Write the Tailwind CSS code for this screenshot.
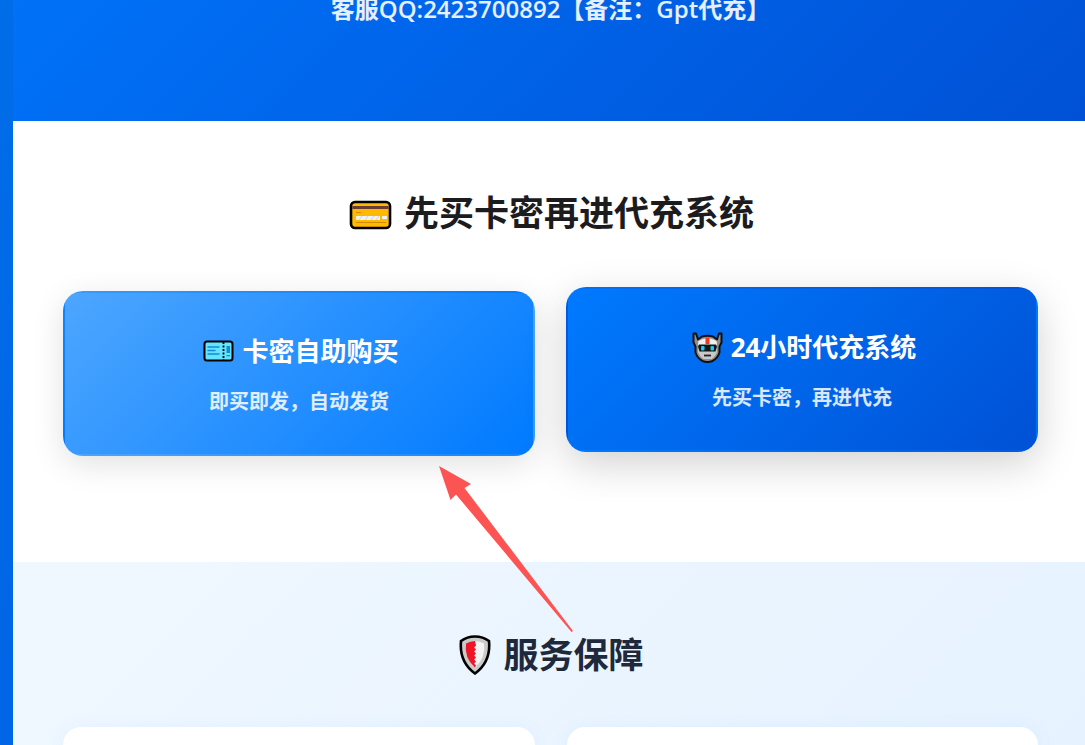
<!DOCTYPE html>
<html lang="zh-CN">
<head>
<meta charset="utf-8">
<meta name="viewport" content="width=device-width, initial-scale=1">
<title>代充系统</title>
<script src="https://cdn.jsdelivr.net/npm/@tailwindcss/browser@4"></script>
</head>
<body class="min-h-screen bg-linear-to-b from-[#006de8] to-[#0065e6] pl-[13px] font-['Open_Sans','Noto_Sans_CJK_SC',sans-serif]">
<div class="relative flex min-h-screen flex-col">
  <header class="h-[121px] overflow-hidden bg-[linear-gradient(135deg,#0072f8,#0051d5)] pl-[50px] pr-[47px] text-center">
    <p class="-mt-[9px] text-2xl leading-9 font-semibold text-white/90">客服QQ:2423700892【备注：Gpt代充】</p>
  </header>

  <main class="flex grow flex-col">
    <section class="h-[441px] bg-white pt-[66px] pr-[47px] pl-[50px]">
      <h2 class="flex items-center justify-center gap-3 pl-0.5 text-[35px] leading-[52px] font-bold text-[#1c1c1e]">
        <svg class="mt-1 h-[30px] w-[43px]" viewBox="0 0 43 30" aria-hidden="true">
          <rect x="2" y="2" width="39" height="26" rx="4" fill="#ffb900" stroke="#000" stroke-width="2.6"/>
          <path d="M3.300 6h36.400v3H3.300z" fill="#6b3d32"/>
          <path d="M7 12.500h5M7 22.500h30" stroke="#d08b00" stroke-width="1"/>
          <path d="M7 16h24v4H7zM33 16h5v3h-5z" fill="#f2f2f2"/>
          <path d="m10 20 3-4m3 4 3-4m3 4 3-4m2 4 3-4" stroke="#cbd5dc"/>
        </svg>
        <span>先买卡密再进代充系统</span>
      </h2>
      <div class="mt-[52px] grid grid-cols-2 gap-[31px] text-center text-white">
        <a href="#buy" class="block h-[165px] rounded-[20px] border-2 border-transparent bg-[linear-gradient(135deg,#4da6ff,#007aff)] pt-10 shadow-[0_8px_32px_rgba(0,0,0,0.12)]">
          <strong class="flex items-center justify-center gap-2 pl-1 text-[26px] leading-9 font-bold">
            <svg class="h-[22px] w-[31px]" viewBox="0 0 31 22" aria-hidden="true">
              <rect x="1.500" y="1.500" width="28" height="19" rx="2.500" fill="#63e4ff" stroke="#000" stroke-width="2"/>
              <path d="M5 7h11M5 10.500h7M5 14h11" stroke="#1688d8" stroke-width="1.300" stroke-linecap="round"/>
              <path d="M20.500 2v18" stroke="#000" stroke-width="1.800" stroke-dasharray="2 1.500"/>
              <path d="M23.500 6h3.500v7h-3.500zM23.500 15h3.500v1.300h-3.500z" fill="#1688d8"/>
            </svg>
            <span>卡密自助购买</span>
          </strong>
          <span class="mt-[17px] block text-xl leading-8 font-semibold text-white/85">即买即发，自动发货</span>
        </a>
        <a href="#recharge" class="-mt-1 block h-[165px] rounded-[20px] border-2 border-transparent bg-[linear-gradient(135deg,#007aff,#0051d5)] pt-10 shadow-[0_12px_40px_rgba(0,0,0,0.18)]">
          <strong class="flex items-center justify-center gap-2 pl-1 text-[26px] leading-9 font-bold">
            <svg class="h-[31px] w-[31px]" viewBox="0 0 31 31" aria-hidden="true">
              <path d="M1.500 1.500h2.500l2 6 4-3q5.500-1.500 11 0l4 3 2-6h2.500v9l-2 4v6q-2 6-7 8.500-5 2-10 0-5-2.500-7-8.500v-6l-2-4z" fill="#8f8f8f" stroke="#111" stroke-width="2" stroke-linejoin="round"/>
              <path d="M6 9q9.500-6 19 0v11q-2 5-5.500 7h-8Q8 25 6 20z" fill="#c9c9c9"/>
              <path d="M7 9q8.500-5 17 0l1 4H6z" fill="#f0f0f0"/>
              <path d="M13.500 5.500h4V12h-4z" fill="#f03a20"/>
              <path d="M7 12.500h17l1 2-1.500 5h-16L6 14.500z" fill="#151515"/>
              <rect x="9" y="14" width="3.500" height="4.500" rx="1.200" fill="#18cbef"/>
              <rect x="18.500" y="14" width="3.500" height="4.500" rx="1.200" fill="#18cbef"/>
              <path d="M12 23.500h7" stroke="#222" stroke-width="1.800"/>
            </svg>
            <span>24小时代充系统</span>
          </strong>
          <span class="mt-[17px] block text-xl leading-8 font-semibold text-white/85">先买卡密，再进代充</span>
        </a>
      </div>
    </section>

    <section class="grow bg-[linear-gradient(135deg,#f0f8ff,#e6f2ff)] pt-[67px] pr-[47px] pl-[50px]">
      <h2 class="flex items-center justify-center gap-3 pl-0.5 text-[35px] leading-[52px] font-bold text-[#1e293b]">
        <svg class="h-10 w-8" viewBox="0 0 32 40" aria-hidden="true">
          <path d="M16 1.500Q24 1.500 30 6 32 27 16 38.500 0 27 2 6 8 1.500 16 1.500z" fill="#cacaca" stroke="#000" stroke-width="2.600"/>
          <path d="M16 6q5 0 9 2.500Q27 23 16 32.500z" fill="#f3f3f3"/>
          <path d="M16 6q-5 0-9 2.500Q5 23 16 32.500l1-2-2-2 2-2-2-2 2-2-2-2 2-2-2-2 2-2-2-2 2-2z" fill="#ed1526"/>
        </svg>
        <span>服务保障</span>
      </h2>
      <div class="mt-[46px] grid grid-cols-2 gap-8">
        <div class="h-[18px] rounded-t-[20px] bg-white shadow-[0_4px_20px_rgba(0,122,255,0.08)]"></div>
        <div class="h-[18px] rounded-t-[20px] bg-white shadow-[0_4px_20px_rgba(0,122,255,0.08)]"></div>
      </div>
    </section>
  </main>

  <svg class="pointer-events-none absolute top-[466px] left-[426px] h-[166px] w-[135px]" viewBox="0 0 135 166" aria-hidden="true">
    <path d="M0 0 32 18 25.500 22 134 165 132.500 166 17 28.500 11.500 34z" fill="#fc5453"/>
  </svg>
</div>
</body>
</html>
